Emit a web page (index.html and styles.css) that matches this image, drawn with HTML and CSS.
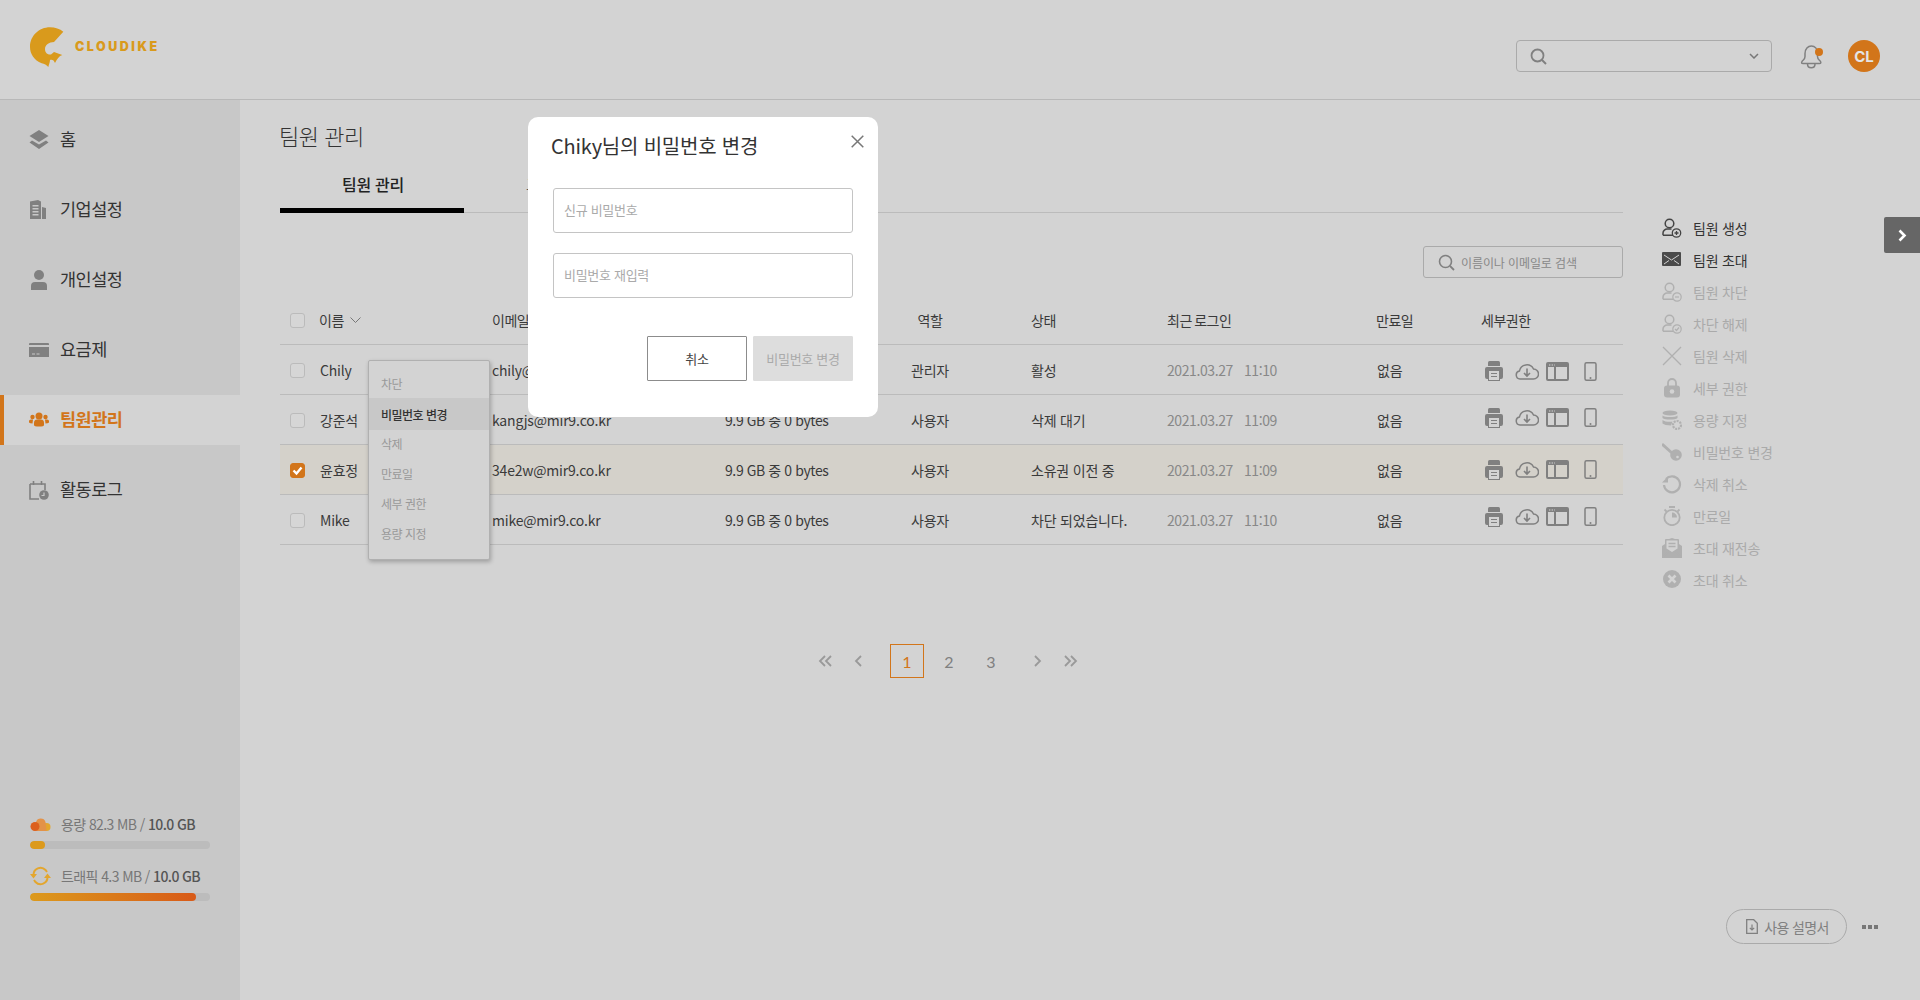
FILE: index.html
```html
<!DOCTYPE html>
<html lang="ko">
<head>
<meta charset="utf-8">
<title>Cloudike</title>
<link rel="stylesheet" href="styles.css">
</head>
<body>
<svg class="defs" width="0" height="0">
  <symbol id="i-print" viewBox="0 0 20 20"><path fill="#808080" d="M4 1.500Q4 0 5.500 0h9Q16 0 16 1.500V5H4z"/><path fill="#808080" d="M3 6h14q2 0 2 2v8q0 2-2 2h-1v2H4v-2H3q-2 0-2-2V8q0-2 2-2z"/><rect x="5" y="10" width="10" height="9" fill="#d3d3d3"/><path stroke="#808080" stroke-width="1.200" d="M7 12.500h6M7 15.500h6"/></symbol>
  <symbol id="i-cloud" viewBox="0 0 24 18"><path fill="none" stroke="#808080" stroke-width="1.500" d="M6 16.500H5a4 4 0 0 1-.6-7.900A7.500 7.500 0 0 1 18.500 6.500 5 5 0 0 1 18.500 16.500z"/><path fill="none" stroke="#808080" stroke-width="1.600" d="M12 6v7M9 10.500l3 3 3-3"/></symbol>
  <symbol id="i-window" viewBox="0 0 23 19"><rect x="1" y="1" width="21" height="17" rx="1" fill="none" stroke="#808080" stroke-width="2"/><rect x="1" y="1" width="21" height="4" fill="#808080"/><path stroke="#808080" stroke-width="2" d="M9 5v13"/><path stroke="#d3d3d3" stroke-width="1.200" stroke-dasharray="1.400 1.200" d="M3 3h6"/></symbol>
  <symbol id="i-phone" viewBox="0 0 13 19"><rect x="1" y=".8" width="11" height="17.400" rx="1.500" fill="none" stroke="#808080" stroke-width="1.500"/><circle cx="6.500" cy="16" r="1" fill="#808080"/></symbol>
  <symbol id="i-person" viewBox="0 0 15 19"><circle cx="7.500" cy="5.500" r="4.300" fill="none" stroke="currentColor" stroke-width="1.500"/><path fill="none" stroke="currentColor" stroke-width="1.500" d="M1 17.200V15c0-2.500 2.500-4 4-4h4.500M1 17.200h10"/></symbol>
</svg>

<div class="app">
  <header class="topbar">
    <a class="logo">
      <svg class="logo-mark" viewBox="0 0 34 41"><path fill="#d99a1c" d="M33.300 4.700L24 15C19 15 15 18 15 22 15 26 18 28 21 27.500L24 25 32.300 28C29 29 27 32 25 36 24 33 22 32 20 33 20 35 19 37 18.300 40 17 38 14 37 11.700 36.300 4 33 0 27 0 19.700 0 9 9 .3 20 .3 25 .3 30 2 33.300 4.700Z"/></svg>
      <span class="logo-text">CLOUDIKE</span>
    </a>
    <div class="top-tools">
      <div class="top-search">
        <svg class="ico-16" viewBox="0 0 17 17"><circle cx="7.500" cy="7.500" r="6" fill="none" stroke="#808080" stroke-width="1.800"/><path stroke="#808080" stroke-width="2" d="M12 12l4 4"/></svg>
        <svg class="ico-chev" viewBox="0 0 10 6"><path fill="none" stroke="#777" stroke-width="1.500" d="M1 1l4 4 4-4"/></svg>
      </div>
      <div class="bell">
        <svg viewBox="0 0 24 24" class="bell-svg"><path fill="none" stroke="#808080" stroke-width="1.500" d="M4 18.500h16.500q2 0 1-2c-1-1.500-3-2-3-5V8.500C18.500 4 16 1 12.300 1 9 1 6 4 6 8.500v3c0 3-2 3.500-3 5-1 2 0 2 1 2zM8.500 19c0 5 7.500 5 7.500 0"/></svg>
        <span class="bell-dot"></span>
      </div>
      <div class="avatar">CL</div>
    </div>
  </header>

  <div class="body-row">
    <aside class="sidebar">
      <nav class="nav">
        <a class="nav-item"><svg class="nav-ico" viewBox="0 0 20 20"><path fill="#808080" d="M10 0l9.500 6L10 12 .5 6z"/><path fill="#808080" d="M3 10.500l7 4 7-4 2.500 2L10 19 .5 12.500z"/></svg><span>홈</span></a>
        <a class="nav-item"><svg class="nav-ico" viewBox="0 0 20 20"><path fill="#808080" fill-rule="evenodd" d="M1 19V1.500L9 0l3 1.500V19zM3.500 5v1.500h6V5zm0 3v1.500h6V8zm0 3v1.500h6V11zm0 3v1.500h6V14z"/><path fill="#808080" d="M13 7l4 1v11h-4z"/></svg><span>기업설정</span></a>
        <a class="nav-item"><svg class="nav-ico" viewBox="0 0 20 20"><circle cx="10" cy="5" r="5" fill="#808080"/><path fill="#808080" d="M2 20v-4q0-4 4-4h8q4 0 4 4v4q-1 .5-3 .5H5q-2 0-3-.5z"/></svg><span>개인설정</span></a>
        <a class="nav-item"><svg class="nav-ico" viewBox="0 0 20 20"><path fill="#808080" d="M1 3h18q1 0 1 1v1H0V4q0-1 1-1zM0 7h20v10H0zm3 6.500v1h3v-1zm4.500 0v1h3v-1z" fill-rule="evenodd"/></svg><span>요금제</span></a>
        <a class="nav-item is-active"><svg class="nav-ico" viewBox="0 0 20 20"><g fill="#d2751a"><circle cx="10" cy="6" r="3.500"/><circle cx="3.500" cy="7" r="2.200"/><circle cx="16.500" cy="7" r="2.200"/><path d="M5 13q0-3.500 3-3.500h4q3 0 3 3.500v2q0 1.500-5 1.500t-5-1.500z"/><path d="M0 11q0-1.500 2-1.500h2L3.500 13.500Q1 13.500 0 12.500zM20 11q0-1.500-2-1.500h-2l.5 4q2.500 0 3.500-1z"/></g></svg><span>팀원관리</span></a>
        <a class="nav-item"><svg class="nav-ico" viewBox="0 0 20 20"><path fill="none" stroke="#808080" stroke-width="1.600" d="M1 4h15v6M1 4v15h9"/><path stroke="#808080" stroke-width="1.600" d="M4.500 1v4M12.500 1v4"/><circle cx="15" cy="15" r="4.800" fill="#808080"/><path fill="none" stroke="#c8c8c8" stroke-width="1.200" d="M15 12.500V15.500h-2.500"/></svg><span>활동로그</span></a>
      </nav>
      <div class="usage">
        <div class="usage-block">
          <div class="usage-label">
            <svg class="usage-ico" viewBox="0 0 20 20"><circle cx="16" cy="13" r="4" fill="#e3a62e"/><path fill="#e39248" d="M5.500 8a5 5 0 0 1 9.500 0l1 9H6z"/><circle cx="4.500" cy="12.500" r="4.500" fill="#dc5f1c"/></svg>
            <span>용량 82.3 MB / <b>10.0 GB</b></span>
          </div>
          <div class="bar"><div class="bar-fill fill-a"></div></div>
        </div>
        <div class="usage-block">
          <div class="usage-label">
            <svg class="usage-ico" viewBox="0 0 21 20"><path fill="none" stroke="#e3a62e" stroke-width="2" d="M3.500 9a7 7 0 0 1 12-5l1.500 2M17.500 11a7 7 0 0 1-12 5l-1.500-2"/><path fill="#e3a62e" d="M0 8h7l-3.500 4.500zM14 12h7l-3.500-4.500z"/></svg>
            <span>트래픽 4.3 MB / <b>10.0 GB</b></span>
          </div>
          <div class="bar"><div class="bar-fill fill-b"></div></div>
        </div>
      </div>
    </aside>

    <main class="panel">
      <h1 class="page-title">팀원 관리</h1>
      <div class="tabs">
        <a class="tab is-active">팀원 관리</a>
        <a class="tab tab-next">그룹 관리</a>
      </div>
      <div class="filter-row">
        <div class="filter-box">
          <svg class="ico-16" viewBox="0 0 17 17"><circle cx="7.500" cy="7.500" r="6" fill="none" stroke="#808080" stroke-width="1.600"/><path stroke="#808080" stroke-width="1.800" d="M12 12l4 4"/></svg>
          <span>이름이나 이메일로 검색</span>
        </div>
      </div>
      <div class="table">
        <div class="row row-head">
          <span class="check"></span>
          <span class="name-head">이름 <svg class="sort" viewBox="0 0 11 6"><path fill="none" stroke="#777" d="M.5.5l5 5 5-5"/></svg></span>
          <span>이메일</span>
          <span></span>
          <span class="c-role">역할</span>
          <span class="c-status">상태</span>
          <span>최근 로그인</span>
          <span>만료일</span>
          <span>세부권한</span>
        </div>
        <div class="row">
          <span class="check"></span><span>Chily</span><span>chily@mir9.co.kr</span><span class="c-used">9.9 GB 중 0 bytes</span><span class="c-role">관리자</span><span class="c-status">활성</span><span class="c-date">2021.03.27<i></i>11:10</span><span class="c-exp">없음</span>
          <span class="perms p1"><svg class="p-print"><use href="#i-print"/></svg><svg class="p-cloud"><use href="#i-cloud"/></svg><svg class="p-win"><use href="#i-window"/></svg><svg class="p-phone"><use href="#i-phone"/></svg></span>
        </div>
        <div class="row">
          <span class="check"></span><span>강준석</span><span>kangjs@mir9.co.kr</span><span class="c-used">9.9 GB 중 0 bytes</span><span class="c-role">사용자</span><span class="c-status">삭제 대기</span><span class="c-date">2021.03.27<i></i>11:09</span><span class="c-exp">없음</span>
          <span class="perms p2"><svg class="p-print"><use href="#i-print"/></svg><svg class="p-cloud"><use href="#i-cloud"/></svg><svg class="p-win"><use href="#i-window"/></svg><svg class="p-phone"><use href="#i-phone"/></svg></span>
        </div>
        <div class="row is-selected">
          <span class="check is-on"><svg viewBox="0 0 15 15"><path fill="none" stroke="#fff" stroke-width="2.400" d="M3.500 7.500l3 3 5-6"/></svg></span><span>윤효정</span><span>34e2w@mir9.co.kr</span><span class="c-used">9.9 GB 중 0 bytes</span><span class="c-role">사용자</span><span class="c-status">소유권 이전 중</span><span class="c-date">2021.03.27<i></i>11:09</span><span class="c-exp">없음</span>
          <span class="perms"><svg class="p-print"><use href="#i-print"/></svg><svg class="p-cloud"><use href="#i-cloud"/></svg><svg class="p-win"><use href="#i-window"/></svg><svg class="p-phone"><use href="#i-phone"/></svg></span>
        </div>
        <div class="row">
          <span class="check"></span><span>Mike</span><span>mike@mir9.co.kr</span><span class="c-used">9.9 GB 중 0 bytes</span><span class="c-role">사용자</span><span class="c-status">차단 되었습니다.</span><span class="c-date">2021.03.27<i></i>11:10</span><span class="c-exp">없음</span>
          <span class="perms p4"><svg class="p-print"><use href="#i-print"/></svg><svg class="p-cloud"><use href="#i-cloud"/></svg><svg class="p-win"><use href="#i-window"/></svg><svg class="p-phone"><use href="#i-phone"/></svg></span>
        </div>
      </div>
      <div class="pager">
        <svg class="pg-dbl" viewBox="0 0 14 12"><path fill="none" stroke="#999" stroke-width="1.800" d="M7 1L2 6l5 5M13 1L8 6l5 5"/></svg>
        <svg class="pg-one pg-prev" viewBox="0 0 8 12"><path fill="none" stroke="#999" stroke-width="1.800" d="M7 1L2 6l5 5"/></svg>
        <a class="pg pg-on">1</a><a class="pg">2</a><a class="pg">3</a>
        <svg class="pg-one pg-next" viewBox="0 0 8 12"><path fill="none" stroke="#999" stroke-width="1.800" d="M1 1l5 5-5 5"/></svg>
        <svg class="pg-dbl" viewBox="0 0 14 12"><path fill="none" stroke="#999" stroke-width="1.800" d="M1 1l5 5-5 5M7 1l5 5-5 5"/></svg>
      </div>
    </main>

    <aside class="actions">
      <ul class="action-list">
        <li class="act act-on"><svg class="act-ico"><use href="#i-person" width="15" height="19"/><circle cx="14.500" cy="15" r="4.200" fill="none" stroke="#444" stroke-width="1.300"/><path stroke="#444" stroke-width="1.300" d="M12.500 15h4M14.500 13v4"/></svg>팀원 생성</li>
        <li class="act act-on"><svg class="act-ico" viewBox="0 0 20 20"><rect x="0" y="2" width="19" height="14" rx="1" fill="#4a4a4a"/><path fill="none" stroke="#d3d3d3" stroke-width="1" d="M2 5l7.500 5L17 5M2 14l5-3.500M17 14l-5-3.500"/></svg>팀원 초대</li>
        <li class="act"><svg class="act-ico"><use href="#i-person" width="15" height="19"/><circle cx="15" cy="15" r="4.200" fill="#d3d3d3" stroke="#b0b0b0" stroke-width="1.200"/><path stroke="#b0b0b0" stroke-width="1.200" d="M13 15h4"/></svg>팀원 차단</li>
        <li class="act"><svg class="act-ico"><use href="#i-person" width="15" height="19"/><circle cx="15" cy="15" r="4.200" fill="#d3d3d3" stroke="#b0b0b0" stroke-width="1.200"/><path fill="none" stroke="#b0b0b0" stroke-width="1.200" d="M13 15l1.500 1.500 2.500-3"/></svg>차단 해제</li>
        <li class="act"><svg class="act-ico" viewBox="0 0 20 20"><path stroke="#b0b0b0" stroke-width="1.300" d="M1 1l18 18M19 1L1 19"/></svg>팀원 삭제</li>
        <li class="act"><svg class="act-ico" viewBox="0 0 20 20"><path fill="none" stroke="#b0b0b0" stroke-width="1.800" d="M6 8V5a4 4 0 0 1 8 0v3"/><rect x="2" y="7.500" width="16" height="12" rx="3" fill="#b0b0b0"/><circle cx="10" cy="13.500" r="2.300" fill="#d3d3d3"/></svg>세부 권한</li>
        <li class="act"><svg class="act-ico" viewBox="0 0 20 20"><ellipse cx="8" cy="3" rx="7.500" ry="2.500" fill="#b0b0b0"/><path fill="#b0b0b0" d="M.5 5.500c2 2 13 2 15 0V8c-2 2-13 2-15 0zM.5 10c2 2 8 2 10 1.500L9 15.500c-4 0-7-1-8.500-2z"/><circle cx="15" cy="15" r="4" fill="none" stroke="#b0b0b0" stroke-width="2.200" stroke-dasharray="2 1"/></svg>용량 지정</li>
        <li class="act"><svg class="act-ico" viewBox="0 0 20 20"><path stroke="#b0b0b0" stroke-width="3" d="M0 2l10 9"/><circle cx="14" cy="13" r="5.800" fill="#b0b0b0"/><circle cx="15.500" cy="15" r="1.300" fill="#d3d3d3"/></svg>비밀번호 변경</li>
        <li class="act"><svg class="act-ico" viewBox="0 0 20 20"><path fill="none" stroke="#b0b0b0" stroke-width="2.200" d="M4 5a8 8 0 1 1-2 6"/><path fill="#b0b0b0" d="M0 8.500h6V2.500z"/></svg>삭제 취소</li>
        <li class="act"><svg class="act-ico" viewBox="0 0 20 20"><circle cx="10" cy="11.500" r="7.700" fill="none" stroke="#b0b0b0" stroke-width="1.800"/><path stroke="#b0b0b0" stroke-width="1.800" d="M7 1h6M2.500 3.500l2 2M17.500 3.500l-2 2"/><path fill="#b0b0b0" d="M10 11.500V6.500a5 5 0 0 1 5 5z"/></svg>만료일</li>
        <li class="act"><svg class="act-ico" viewBox="0 0 20 20"><path fill="#b0b0b0" d="M0 8l3-2V2q0-1 1-1h3l3-1 3 1h3q1 0 1 1v4l3 2v12H0z"/><path fill="#d3d3d3" d="M4.500 2.500h11v8L10 14l-5.500-3.500z"/><path stroke="#b0b0b0" stroke-width="1.300" d="M6.500 5.500h7M6.500 8.500h7M1 19l6-6M19 19l-6-6"/></svg>초대 재전송</li>
        <li class="act"><svg class="act-ico" viewBox="0 0 20 20"><circle cx="10" cy="9" r="9" fill="#b0b0b0"/><path stroke="#d3d3d3" stroke-width="2.600" d="M6.500 5.500l7 7M13.500 5.500l-7 7"/></svg>초대 취소</li>
      </ul>
      <div class="help-row">
        <a class="manual"><svg class="doc" viewBox="0 0 12 15"><path fill="none" stroke="#808080" stroke-width="1.300" d="M.7.7h7l3.600 3.600v10H.7z"/><path fill="none" stroke="#808080" stroke-width="1.200" d="M6 5.500v5.500M3.800 8.800L6 11l2.200-2.200"/></svg>사용 설명서</a>
        <span class="dots"><i></i><i></i><i></i></span>
      </div>
    </aside>
  </div>
</div>

<a class="side-toggle"><svg viewBox="0 0 9 13"><path fill="none" stroke="#fff" stroke-width="2.600" d="M1.500 1.500l5 5-5 5"/></svg></a>

<ul class="ctx-menu">
  <li>차단</li>
  <li class="is-hover">비밀번호 변경</li>
  <li>삭제</li>
  <li>만료일</li>
  <li>세부 권한</li>
  <li>용량 지정</li>
</ul>

<section class="modal">
  <div class="modal-head">
    <h2>Chiky님의 비밀번호 변경</h2>
    <svg class="modal-x" viewBox="0 0 13 13"><path stroke="#777" stroke-width="1.500" d="M.7.7l11.600 11.600M12.300.7L.7 12.300"/></svg>
  </div>
  <div class="field"><span>신규 비밀번호</span></div>
  <div class="field"><span>비밀번호 재입력</span></div>
  <div class="modal-btns">
    <button class="btn">취소</button>
    <button class="btn btn-off">비밀번호 변경</button>
  </div>
</section>
</body>
</html>
```
FILE: styles.css
```css
* { box-sizing: border-box; }
html, body { margin: 0; height: 1000px; overflow: hidden; }
body {
  background: #d3d3d3;
  color: #333;
  font-family: "Noto Sans CJK KR", "Noto Sans", sans-serif;
  font-size: 14px;
  letter-spacing: -0.2px;
  position: relative;
}
.defs { position: absolute; }
a { color: inherit; text-decoration: none; }
ul { list-style: none; margin: 0; padding: 0; }
i { font-style: normal; }

.app { display: flex; flex-direction: column; height: 1000px; }

/* top bar */
.topbar {
  height: 100px;
  flex: none;
  border-bottom: 1px solid #b8b8b8;
  display: flex;
  justify-content: space-between;
  padding: 27px 40px 0 30px;
}
.logo { display: flex; align-items: flex-start; }
.logo-mark { width: 34px; height: 41px; }
.logo-text {
  margin: 12px 0 0 11px;
  font-family: "Inter", sans-serif;
  font-weight: 900;
  font-size: 12.5px;
  line-height: 16px;
  letter-spacing: 2.5px;
  color: #d99a1c;
}
.top-tools { display: flex; align-items: flex-start; padding-top: 13px; }
.top-search {
  width: 256px;
  height: 32px;
  border: 1px solid #aaa;
  border-radius: 4px;
  display: flex;
  align-items: center;
  justify-content: space-between;
  padding: 0 12px 0 13px;
}
.ico-16 { width: 17px; height: 17px; flex: none; }
.ico-chev { width: 10px; height: 6px; }
.bell { position: relative; width: 24px; height: 24px; margin: 5px 25px 0 27px; }
.bell-svg { width: 24px; height: 24px; display: block; }
.bell-dot {
  position: absolute; right: 0; top: 3px;
  width: 8px; height: 8px; border-radius: 50%;
  background: #d2751a;
}
.avatar {
  width: 32px; height: 32px; border-radius: 50%;
  background: #d2751a; color: #e4e4e4;
  font-family: "Inter", sans-serif; font-weight: 700; font-size: 15px;
  letter-spacing: 0;
  display: flex; align-items: center; justify-content: center;
}

.body-row { flex: 1; display: flex; min-height: 0; }

/* sidebar */
.sidebar {
  width: 240px; flex: none;
  background: #c8c8c8;
  display: flex; flex-direction: column; justify-content: space-between;
  padding-top: 15px;
}
.nav { display: flex; flex-direction: column; gap: 20px; }
.nav-item {
  height: 50px;
  display: flex; align-items: center;
  padding-left: 29px;
  font-size: 17.5px;
  letter-spacing: -0.5px;
  color: #333;
}
.nav-item span { margin-top: -3px; }
.nav-ico { width: 20px; height: 20px; margin-right: 11px; flex: none; }
.nav-item.is-active {
  background: #d3d3d3;
  border-left: 4px solid #d2751a;
  padding-left: 25px;
  color: #d2751a;
  font-weight: 700;
}
.usage { padding: 0 30px; margin-bottom: 99px; }
.usage-block { margin-bottom: 17px; }
.usage-block:last-child { margin-bottom: 0; }
.usage-label { display: flex; align-items: center; height: 20px; color: #777; margin-bottom: 7px; letter-spacing: -0.6px; }
.usage-label b { color: #555; font-weight: 500; }
.usage-ico { width: 21px; height: 20px; margin-right: 10px; flex: none; }
.bar { width: 180px; height: 8px; border-radius: 4px; background: #bcbcbc; overflow: hidden; }
.bar-fill { height: 100%; border-radius: 4px; }
.fill-a { width: 15px; background: #dc9a1c; }
.fill-b { width: 166px; background: linear-gradient(90deg, #dc9a1c, #d85a18); }

/* panel */
.panel { width: 1343px; margin-left: 40px; flex: none; }
.page-title {
  margin: 19px 0 9px -1px;
  font-size: 22px; line-height: 32px; font-weight: 300;
  letter-spacing: -0.5px;
  color: #333;
}
.tabs { display: flex; height: 53px; border-bottom: 1px solid #bbb; }
.tab {
  width: 184px; height: 53px;
  display: flex; align-items: center; justify-content: center;
  padding-bottom: 5px;
  font-size: 16px; color: #555;
  letter-spacing: -0.3px;
}
.tab.is-active { border-bottom: 5px solid #000; font-weight: 500; color: #222; padding-bottom: 0; padding-left: 2px; }
.tab-next { justify-content: flex-start; padding-left: 62px; }
.filter-row { display: flex; justify-content: flex-end; margin-top: 33px; }
.filter-box {
  width: 200px; height: 32px;
  border: 1px solid #aaa; border-radius: 3px;
  display: flex; align-items: center;
  padding-left: 14px;
  font-size: 12px; color: #888;
  letter-spacing: -0.1px;
}
.filter-box span { margin-left: 6px; }

.table { margin-top: 18px; }
.row {
  display: grid;
  grid-template-columns: 40px 172px 233px 150px 110px 182px 209px 105px 142px;
  align-items: center;
  height: 50px;
  border-bottom: 1px solid #bbb;
  color: #3a3a3a;
}
.row-head { height: 49px; letter-spacing: -0.5px; word-spacing: -1px; }
.is-selected { background: #d4d1ca; }
.check {
  width: 15px; height: 15px; margin: 1px 0 0 10px;
  border: 1px solid #bbb; border-radius: 3px;
  background: #d6d6d6;
  display: block;
}
.check.is-on { background: #d2751a; border-color: #d2751a; }
.check.is-on svg { display: block; width: 15px; height: 15px; margin: -1px; }
.name-head { display: flex; align-items: center; gap: 6px; margin-left: -1px; }
.sort { width: 11px; height: 6px; }
.c-used { letter-spacing: -0.4px; }
.c-role { text-align: center; }
.c-status { padding-left: 46px; }
.c-date { color: #888; letter-spacing: -0.4px; }
.c-date i { display: inline-block; width: 11px; }
.c-exp { padding-left: 1px; }
.perms { display: flex; align-items: center; padding-left: 3px; }
.perms svg { display: block; height: 19px; }
.perms .p-print { width: 20px; height: 20px; }
.p-cloud { width: 24px; margin-left: 11px; }
.p-win { width: 23px; margin-left: 7px; }
.p-phone { width: 13px; margin-left: 15px; }
.p1 { margin-top: 3px; }
.p2 { margin-bottom: 4px; }
.p4 { margin-bottom: 6px; }

.pager {
  margin-top: 99px;
  margin-left: 538px;
  display: flex; align-items: center; height: 34px;
}
.pg-dbl { width: 14px; height: 12px; flex: none; }
.pg-one { width: 8px; height: 12px; flex: none; }
.pg-prev { margin: 0 28px 0 22px; }
.pg-next { margin: 0 22px 0 18px; }
.pg {
  width: 34px; height: 34px; margin-right: 8px;
  display: flex; align-items: center; justify-content: center;
  font-family: "Lato", sans-serif; font-size: 16px; color: #808080; letter-spacing: 0;
}
.pg-on { border: 1px solid #d2751a; color: #d2751a; font-weight: 400; }

/* action column */
.actions {
  flex: 1; margin-left: 39px;
  display: flex; flex-direction: column; justify-content: space-between;
  padding: 112px 42px 56px 0;
}
.action-list { display: flex; flex-direction: column; }
.act {
  height: 32px;
  display: flex; align-items: center;
  color: #aaa;
}
.act-on { color: #333; }
.act-ico { width: 20px; height: 20px; margin-right: 11px; flex: none; color: #b0b0b0; }
.act-on .act-ico { color: #444; }
.help-row { display: flex; align-items: center; justify-content: flex-end; }
.manual {
  width: 121px; height: 35px;
  border: 1px solid #aaa; border-radius: 18px;
  display: flex; align-items: center; justify-content: center;
  padding-left: 2px;
  color: #808080;
  letter-spacing: -0.6px;
}
.doc { width: 12px; height: 15px; margin-right: 6px; }
.dots { display: flex; gap: 2px; margin-left: 15px; }
.dots i { width: 4px; height: 4px; background: #777; }

.side-toggle {
  position: absolute; right: 0; top: 217px;
  width: 36px; height: 36px;
  background: #666; border-radius: 2px 0 0 2px;
  display: flex; align-items: center; justify-content: center;
  padding-left: 1px;
}
.side-toggle svg { width: 9px; height: 13px; }

/* context menu */
.ctx-menu {
  position: absolute; left: 368px; top: 360px;
  width: 122px; height: 200px;
  padding-top: 7px;
  background: #d3d3d3;
  border: 1px solid #b0b0b0;
  border-radius: 2px;
  box-shadow: 1px 2px 4px rgba(0,0,0,.25);
  font-size: 12px; color: #999;
  letter-spacing: -0.5px;
}
.ctx-menu li { height: 30px; display: flex; align-items: center; padding-left: 12px; }
.ctx-menu .is-hover { background: #c8c8c8; color: #333; font-weight: 500; height: 32px; margin-bottom: -2px; }

/* modal */
.modal {
  position: absolute; left: 528px; top: 117px;
  width: 350px; height: 300px;
  background: #fff; border-radius: 10px;
  padding: 0 25px;
}
.modal-head { height: 71px; display: flex; align-items: flex-start; justify-content: space-between; }
.modal-head h2 { margin: 13px 0 0 -2px; font-size: 20px; line-height: 32px; font-weight: 400; color: #333; letter-spacing: -0.2px; }
.modal-x { width: 13px; height: 13px; margin: 18px -11px 0 0; }
.field {
  height: 45px;
  border: 1px solid #c4c4c4; border-radius: 3px;
  margin-bottom: 20px;
  display: flex; align-items: center;
  padding-left: 10px;
  font-size: 13px;
  letter-spacing: -0.3px;
  color: #aaa;
}
.field span { margin-top: -2px; }
.modal-btns { display: flex; justify-content: flex-end; gap: 6px; margin-top: 38px; }
.btn {
  width: 100px; height: 45px;
  font: inherit; font-size: 13px; letter-spacing: -0.3px;
  background: #fff; color: #444;
  border: 1px solid #8c8c8c; border-radius: 1px;
  padding: 0;
}
.btn-off { background: #ddd; border-color: #ddd; color: #aaa; }
```
